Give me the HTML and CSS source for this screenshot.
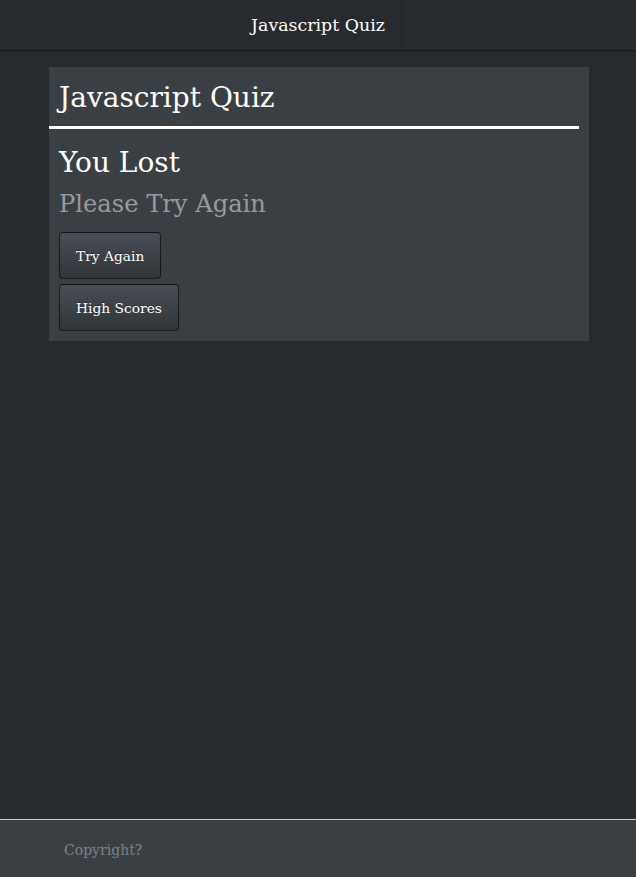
FILE: index.html
```html
<!DOCTYPE html>
<html lang="en">
<head>
<meta charset="utf-8">
<title>Javascript Quiz</title>
<link rel="stylesheet" href="styles.css">
</head>
<body>
<header class="navbar">
  <div class="brand">Javascript Quiz</div>
</header>
<main class="content">
  <section class="panel">
    <h1 class="panel-title">Javascript Quiz</h1>
    <div class="panel-body">
      <h2 class="result">You Lost</h2>
      <h3 class="subtitle">Please Try Again</h3>
      <div class="actions">
        <button class="btn">Try Again</button>
        <button class="btn">High Scores</button>
      </div>
    </div>
  </section>
</main>
<footer class="footer">
  <p class="copyright">Copyright?</p>
</footer>
</body>
</html>
```

FILE: styles.css
```css
* { box-sizing: border-box; }
html, body { height: 100%; }
body {
  margin: 0;
  background: #272b30;
  color: #fff;
  font-family: "DejaVu Serif", serif;
  display: flex;
  flex-direction: column;
}
.navbar {
  height: 51px;
  display: flex;
  justify-content: center;
  border-bottom: 1px solid #16181b;
  background: #272b30;
  flex: none;
}
.brand {
  padding: 0 16px;
  display: flex;
  align-items: center;
  font-size: 17.4px;
  border-right: 1px solid #1f2226;
  border-left: 1px solid #272b30;
  color: #fff;
}
.content {
  flex: 1;
  padding: 16px 47px 0 49px;
}
.panel {
  background: #3a3f44;
  padding: 0 10px 10px 10px;
  width: 540px;
}
.panel-title {
  margin: 0 0 0 -10px;
  font-weight: normal;
  font-size: 28px;
  line-height: 56px;
  padding: 3px 0 0 10px;
  border-bottom: 3px solid #fff;
}
.panel-body { padding-top: 12px; }
.result {
  margin: 0;
  font-weight: normal;
  font-size: 28px;
  line-height: 44px;
}
.subtitle {
  margin: 0;
  font-weight: normal;
  font-size: 24.2px;
  line-height: 38px;
  color: #9a9a9a;
}
.actions {
  display: flex;
  flex-direction: column;
  align-items: flex-start;
  gap: 5px;
  margin-top: 9px;
}
.btn {
  font-family: "DejaVu Serif", serif;
  font-size: 13.8px;
  color: #fff;
  height: 47px;
  padding: 0 16px;
  border: 1px solid rgba(0,0,0,0.6);
  border-radius: 4px;
  background-image: linear-gradient(#484e55, #3a3f44 60%, #313539);
  text-shadow: 0 -1px 0 rgba(0,0,0,0.3);
}
.footer {
  flex: none;
  height: 58px;
  background: #3a3f44;
  border-top: 1px solid #c8c8c8;
  padding: 2px 64px 0;
  display: flex;
  align-items: center;
}
.copyright {
  margin: 0;
  color: #7a8288;
  font-size: 14px;
}
```
